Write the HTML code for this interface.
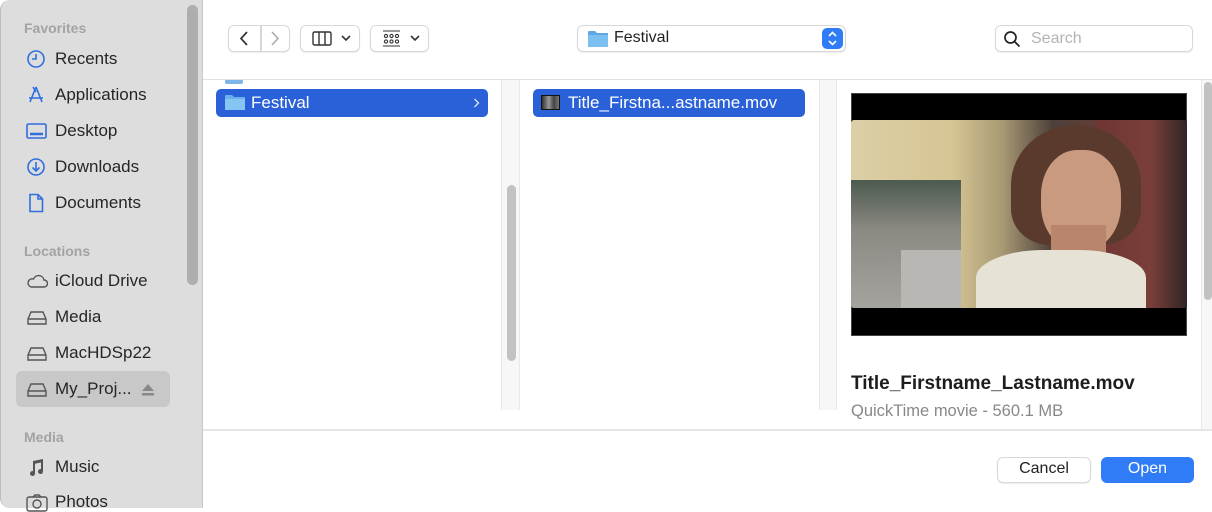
<!DOCTYPE html>
<html><head><meta charset="utf-8"><style>
*{margin:0;padding:0;box-sizing:border-box}
body{width:1212px;height:508px;overflow:hidden;background:#fff;font-family:"Liberation Sans",sans-serif;position:relative;color:#222}
.a{position:absolute}
#side{left:0;top:0;width:203px;height:508px;background:#dddddd;border-right:1px solid #c8c8c8;border-left:1px solid #bdbdbd;border-radius:10px 0 0 10px}
.hd{position:absolute;left:23px;font-size:14px;font-weight:bold;color:#a3a3a3}
.it{position:absolute;left:54px;font-size:17px;color:#262626}
.ic{position:absolute;left:25px}
.btn{position:absolute;background:#fff;border:1px solid #d8d8d8;border-radius:6px;box-shadow:0 1px 1px rgba(0,0,0,.08)}
</style></head><body>
<div id="side" class="a">
<div class="a" style="left:186px;top:5px;width:11px;height:280px;background:#aeaeae;border-radius:6px"></div>
<div class="hd" style="top:20px">Favorites</div>
<svg class="ic" style="top:49px" width="20" height="20" viewBox="0 0 20 20" fill="none" stroke="#2f6fe0" stroke-width="1.6"><circle cx="10" cy="10" r="8"/><path d="M10 5v5H6"/></svg>
<div class="it" style="top:49px">Recents</div>
<svg class="ic" style="top:85px" width="20" height="20" viewBox="0 0 20 20" fill="none" stroke="#2f6fe0" stroke-width="1.6"><path d="M10 2L4 17M10 2l6 15M3 13h14M7 2l3 5"/></svg>
<div class="it" style="top:85px">Applications</div>
<svg class="ic" style="top:121px" width="21" height="20" viewBox="0 0 21 20" fill="none" stroke="#2f6fe0" stroke-width="1.6"><rect x="1" y="3" width="19" height="14" rx="1.5"/><path d="M4 13h13" stroke-width="2.5"/></svg>
<div class="it" style="top:121px">Desktop</div>
<svg class="ic" style="top:157px" width="20" height="20" viewBox="0 0 20 20" fill="none" stroke="#2f6fe0" stroke-width="1.6"><circle cx="10" cy="10" r="8"/><path d="M10 5v9M6.5 10.5L10 14l3.5-3.5"/></svg>
<div class="it" style="top:157px">Downloads</div>
<svg class="ic" style="top:193px" width="20" height="20" viewBox="0 0 20 20" fill="none" stroke="#2f6fe0" stroke-width="1.6"><path d="M4 1.5h8l4.5 4.5v12.5H4zM12 1.5V6h4.5"/></svg>
<div class="it" style="top:193px">Documents</div>
<div class="hd" style="top:243px">Locations</div>
<svg class="ic" style="top:272px" width="22" height="18" viewBox="0 0 22 18" fill="none" stroke="#555" stroke-width="1.4"><path d="M5 15h13a3.5 3.5 0 0 0 0-7 5.5 5.5 0 0 0-10.5-1A4 4 0 0 0 5 15z"/></svg>
<div class="it" style="top:271px">iCloud Drive</div>
<div class="a" style="left:15px;top:371px;width:154px;height:36px;background:#c8c8c8;border-radius:6px"></div>
<svg class="ic" style="top:309px" width="22" height="18" viewBox="0 0 22 18" fill="none" stroke="#555" stroke-width="1.4"><path d="M2 10l3-7h12l3 7v5H2zM2 10h18"/></svg>
<div class="it" style="top:307px">Media</div>
<svg class="ic" style="top:345px" width="22" height="18" viewBox="0 0 22 18" fill="none" stroke="#555" stroke-width="1.4"><path d="M2 10l3-7h12l3 7v5H2zM2 10h18"/></svg>
<div class="it" style="top:343px">MacHDSp22</div>
<svg class="ic" style="top:381px" width="22" height="18" viewBox="0 0 22 18" fill="none" stroke="#555" stroke-width="1.4"><path d="M2 10l3-7h12l3 7v5H2zM2 10h18"/></svg>
<div class="it" style="top:379px">My_Proj...</div>
<svg class="a" style="left:140px;top:383px" width="14" height="13" viewBox="0 0 14 13" fill="#888"><path d="M7 1l6 7H1z"/><rect x="1" y="10" width="12" height="2.5"/></svg>
<div class="hd" style="top:429px">Media</div>
<svg class="ic" style="top:458px" width="20" height="20" viewBox="0 0 20 20" fill="#555"><path d="M7 3l10-2v12.5a2.5 2.5 0 1 1-2-2.4V4.5L9 5.7v9.8a2.5 2.5 0 1 1-2-2.4z"/></svg>
<div class="it" style="top:457px">Music</div>
<svg class="ic" style="top:494px" width="22" height="18" viewBox="0 0 22 18" fill="none" stroke="#555" stroke-width="1.4"><rect x="1" y="3" width="20" height="14" rx="2"/><circle cx="11" cy="10" r="4"/><path d="M7 3l2-2h4l2 2"/></svg>
<div class="it" style="top:492px">Photos</div>
</div>

<!-- toolbar -->
<div class="btn" style="left:228px;top:25px;width:33px;height:27px;border-radius:6px 0 0 6px"></div>
<svg class="a" style="left:237px;top:30px" width="14" height="17" viewBox="0 0 14 17" fill="none" stroke="#333" stroke-width="1.7"><path d="M10 2L4 8.5 10 15"/></svg>
<div class="btn" style="left:261px;top:25px;width:29px;height:27px;border-radius:0 6px 6px 0"></div>
<svg class="a" style="left:268px;top:30px" width="14" height="17" viewBox="0 0 14 17" fill="none" stroke="#aaa" stroke-width="1.5"><path d="M4 2l6 6.5L4 15"/></svg>
<div class="btn" style="left:300px;top:25px;width:60px;height:27px"></div>
<svg class="a" style="left:312px;top:31px" width="20" height="15" viewBox="0 0 20 15" fill="none" stroke="#333" stroke-width="1.4"><rect x="1" y="1" width="18" height="13" rx="1.5"/><path d="M7 1v13M13 1v13"/></svg>
<svg class="a" style="left:341px;top:34px" width="10" height="8" viewBox="0 0 10 8" fill="none" stroke="#333" stroke-width="1.6"><path d="M1 2l4 4 4-4"/></svg>
<div class="btn" style="left:370px;top:25px;width:59px;height:27px"></div>
<svg class="a" style="left:382px;top:30px" width="19" height="17" viewBox="0 0 19 17" fill="none" stroke="#333" stroke-width="1.1"><path d="M1 1h17M1 16h17"/><circle cx="4" cy="6" r="1.6"/><circle cx="9.5" cy="6" r="1.6"/><circle cx="15" cy="6" r="1.6"/><circle cx="4" cy="11.5" r="1.6"/><circle cx="9.5" cy="11.5" r="1.6"/><circle cx="15" cy="11.5" r="1.6"/></svg>
<svg class="a" style="left:410px;top:34px" width="10" height="8" viewBox="0 0 10 8" fill="none" stroke="#333" stroke-width="1.6"><path d="M1 2l4 4 4-4"/></svg>

<div class="btn" style="left:577px;top:25px;width:269px;height:27px"></div>
<svg class="a" style="left:588px;top:30px" width="21" height="18" viewBox="0 0 21 18"><path d="M0 2a1 1 0 0 1 1-1h6l2 2h11v14H0z" fill="#5fa8e6"/><path d="M0 5h20v12H0z" fill="#7cc0f2"/></svg>
<div class="a" style="left:614px;top:29px;font-size:16px;color:#222">Festival</div>
<div class="a" style="left:822px;top:28px;width:21px;height:21px;background:#2f7cf6;border-radius:5px"></div>
<svg class="a" style="left:826px;top:30px" width="13" height="17" viewBox="0 0 13 17" fill="none" stroke="#fff" stroke-width="1.6"><path d="M3 6l3.5-3.5L10 6M3 11l3.5 3.5L10 11"/></svg>

<div class="btn" style="left:995px;top:25px;width:198px;height:27px"></div>
<svg class="a" style="left:1003px;top:30px" width="18" height="18" viewBox="0 0 18 18" fill="none" stroke="#222" stroke-width="1.7"><circle cx="7.5" cy="7.5" r="5.5"/><path d="M11.5 11.5l5 5"/></svg>
<div class="a" style="left:1031px;top:30px;font-size:16px;color:#b3b3b3">Search</div>

<div class="a" style="left:203px;top:79px;width:1009px;height:1px;background:#e2e2e2"></div>

<!-- columns -->
<div class="a" style="left:501px;top:80px;width:19px;height:330px;background:#f7f7f7;border-left:1px solid #e8e8e8;border-right:1px solid #e8e8e8"></div>
<div class="a" style="left:507px;top:185px;width:9px;height:176px;background:#c2c2c2;border-radius:5px"></div>
<div class="a" style="left:819px;top:80px;width:18px;height:330px;background:#f7f7f7;border-left:1px solid #e8e8e8;border-right:1px solid #e8e8e8"></div>
<div class="a" style="left:1201px;top:80px;width:11px;height:350px;background:#f7f7f7;border-left:1px solid #e8e8e8"></div>
<div class="a" style="left:1204px;top:82px;width:8px;height:218px;background:#c2c2c2;border-radius:4px"></div>

<div class="a" style="left:225px;top:80px;width:18px;height:4px;background:#7cb7ea;border-radius:0 0 2px 2px"></div>
<div class="a" style="left:216px;top:89px;width:272px;height:28px;background:#2a61d8;border-radius:5px"></div>
<svg class="a" style="left:225px;top:94px" width="20" height="17" viewBox="0 0 20 17"><path d="M0 2a1 1 0 0 1 1-1h6l2 2h11v13H0z" fill="#6ab0ec"/><path d="M0 5h20v11H0z" fill="#86c4f3"/></svg>
<div class="a" style="left:251px;top:93px;font-size:17px;color:#fff">Festival</div>
<svg class="a" style="left:473px;top:98px" width="7" height="10" viewBox="0 0 7 10" fill="none" stroke="#dfe6fb" stroke-width="1.3"><path d="M1.5 1l4 4-4 4"/></svg>

<div class="a" style="left:533px;top:89px;width:272px;height:28px;background:#2a61d8;border-radius:5px"></div>
<div class="a" style="left:541px;top:95px;width:19px;height:15px;background:linear-gradient(90deg,#333,#999 40%,#444 70%,#777);border:1px solid #111"></div>
<div class="a" style="left:568px;top:93px;font-size:17px;color:#fff">Title_Firstna...astname.mov</div>

<!-- preview -->
<div class="a" style="left:851px;top:93px;width:336px;height:243px;background:#000;border:1px solid #444"></div>
<div class="a" style="left:851px;top:120px;width:336px;height:188px;overflow:hidden;border-radius:3px;background:linear-gradient(90deg,#dccfa6 0%,#d6c594 30%,#a89a74 45%,#4d403a 60%,#6e3a36 80%,#3b2b2a 100%)">
<div class="a" style="left:0;top:60px;width:110px;height:128px;background:linear-gradient(180deg,#4c5a4f,#8d8a84 40%,#a5a39e)"></div>
<div class="a" style="left:50px;top:130px;width:60px;height:58px;background:#b9b7b3"></div>
<div class="a" style="left:245px;top:0;width:91px;height:188px;background:linear-gradient(90deg,#6d3533,#7b3f3a 60%,#2f2524)"></div>
<div class="a" style="left:160px;top:5px;width:130px;height:120px;border-radius:50% 50% 30% 30%;background:#5a3a2c"></div>
<div class="a" style="left:190px;top:30px;width:80px;height:100px;border-radius:45%;background:#c99a80"></div>
<div class="a" style="left:200px;top:105px;width:55px;height:40px;background:#b9856c"></div>
<div class="a" style="left:125px;top:130px;width:170px;height:70px;border-radius:40% 40% 0 0;background:#e6e2d6"></div>
</div>
<div class="a" style="left:851px;top:373px;font-size:19px;font-weight:bold;color:#1d1d1d">Title_Firstname_Lastname.mov</div>
<div class="a" style="left:851px;top:402px;font-size:16.5px;color:#888">QuickTime movie - 560.1 MB</div>

<div class="a" style="left:203px;top:429px;width:1009px;height:2px;background:#e6e6e6"></div>
<div class="btn" style="left:997px;top:457px;width:94px;height:26px"></div>
<div class="a" style="left:997px;top:460px;width:94px;text-align:center;font-size:16px;color:#222">Cancel</div>
<div class="a" style="left:1101px;top:457px;width:93px;height:26px;background:#2f7cf6;border-radius:6px"></div>
<div class="a" style="left:1101px;top:460px;width:93px;text-align:center;font-size:16px;color:#fff">Open</div>
</body></html>
